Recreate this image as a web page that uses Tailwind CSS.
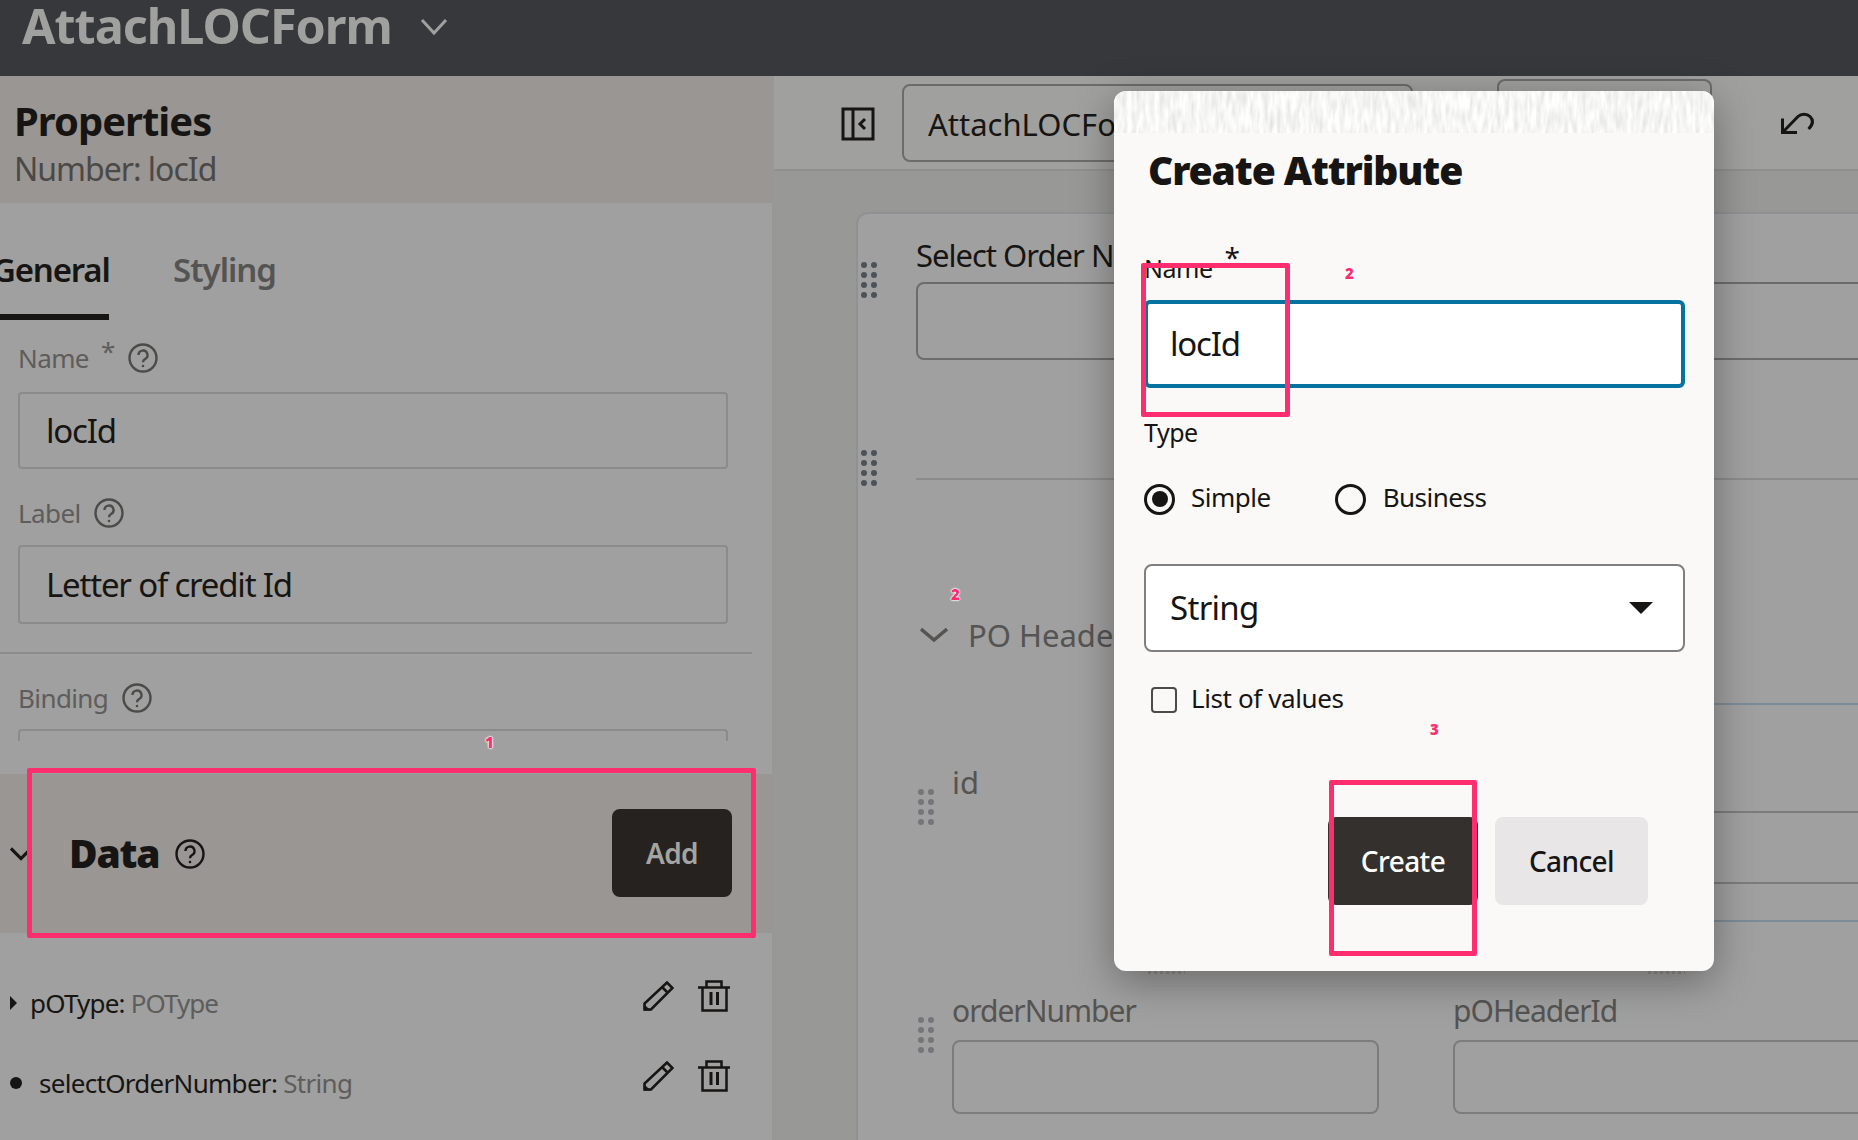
<!DOCTYPE html>
<html lang="en">
<head>
    <meta charset="UTF-8">
    <title>AttachLOCForm</title>
    <script src="https://cdn.jsdelivr.net/npm/@tailwindcss/browser@4"></script>
</head>
<body class="h-screen overflow-hidden relative bg-[#a0a0a0] text-[#161513] font-['Noto_Sans',sans-serif]">
    <!-- Top bar -->
    <header class="h-[76px] bg-[#37383c] flex items-start pl-[22px]">
        <h1 class="text-[48.500px] leading-[50px] font-bold text-[#a0a09e] tracking-[-1px]">AttachLOCForm</h1>
        <svg class="w-[28px] h-[18px] ml-[28px] mt-[18px]" viewBox="0 0 28 18" fill="none" stroke="#a0a09e" stroke-width="3"><path d="M2 2l12 13L26 2"/></svg>
    </header>

    <div class="flex h-[1064px]">
        <!-- Properties panel -->
        <aside class="w-[774px] shrink-0 border-r-2 border-[#979797] bg-[#a0a0a0] overflow-hidden">
            <div class="h-[127px] bg-[#9a9694] pl-[14px] pt-[22px]">
                <h2 class="text-[40px] leading-[46px] font-bold tracking-[-1px]">Properties</h2>
                <p class="mt-[3px] text-[32px] leading-[44px] text-[#4a4947] tracking-[-1px]">Number: locId</p>
            </div>
            <div class="flex h-[117px] pt-[45px] -ml-[8px]">
                <div class="w-[117px] h-[72px] border-b-[6px] border-[#161513] text-[33px] leading-[44px] font-semibold tracking-[-1.200px] whitespace-nowrap">General</div>
                <div class="ml-[64px] text-[33px] leading-[44px] font-semibold text-[#555452] tracking-[-1px]">Styling</div>
            </div>
            <div class="pl-[18px] pr-[44px]">
                <div class="flex items-center h-[36px] mt-[20px] text-[#5e5d5b] text-[26px] tracking-[-0.6px]">
                    <span>Name</span><span class="ml-[12px] -mt-[14px] text-[26px]">*</span>
                    <svg class="w-[30px] h-[30px] ml-[13px]" viewBox="0 0 30 30" fill="none" stroke="#4c4b49" stroke-width="2.4"><circle cx="15" cy="15" r="13.5"/><path d="M10.5 12a4.5 4.5 0 1 1 6.6 4c-1.500.9-2.100 1.800-2.100 3.200"/><circle cx="15" cy="23" r="1.300" fill="#4c4b49" stroke="none"/></svg>
                </div>
                <div class="h-[77px] mt-[16px] border-2 border-[#8b8b8b] rounded-[4px] pl-[26px] flex items-center text-[33px] tracking-[-1.2px]">locId</div>
                <div class="flex items-center h-[36px] mt-[26px] text-[#5e5d5b] text-[26px] tracking-[-0.6px]">
                    <span>Label</span>
                    <svg class="w-[30px] h-[30px] ml-[13px]" viewBox="0 0 30 30" fill="none" stroke="#4c4b49" stroke-width="2.4"><circle cx="15" cy="15" r="13.5"/><path d="M10.5 12a4.5 4.5 0 1 1 6.6 4c-1.500.9-2.100 1.800-2.100 3.200"/><circle cx="15" cy="23" r="1.300" fill="#4c4b49" stroke="none"/></svg>
                </div>
                <div class="h-[79px] mt-[14px] border-2 border-[#8b8b8b] rounded-[4px] pl-[26px] flex items-center text-[33px] tracking-[-1.2px]">Letter of credit Id</div>
            </div>
            <div class="h-[2px] w-[752px] bg-[#8b8b8b] mt-[28px]"></div>
            <div class="pl-[18px] pr-[44px] h-[120px] overflow-hidden">
                <div class="flex items-center h-[36px] mt-[26px] text-[#5e5d5b] text-[26px] tracking-[-0.6px]">
                    <span>Binding</span>
                    <svg class="w-[30px] h-[30px] ml-[14px]" viewBox="0 0 30 30" fill="none" stroke="#4c4b49" stroke-width="2.4"><circle cx="15" cy="15" r="13.5"/><path d="M10.5 12a4.5 4.5 0 1 1 6.6 4c-1.500.9-2.100 1.800-2.100 3.200"/><circle cx="15" cy="23" r="1.300" fill="#4c4b49" stroke="none"/></svg>
                </div>
                <div class="h-[12px] mt-[13px] border-2 border-b-0 border-[#8b8b8b] rounded-t-[4px]"></div>
            </div>
            <!-- Data section -->
            <div class="h-[159px] bg-[#9a9694] flex items-center pl-[10px] pr-[40px]">
                <svg class="w-[22px] h-[16px]" viewBox="0 0 24 16" fill="none" stroke="#161513" stroke-width="3.500"><path d="M1 2l11 11L23 2"/></svg>
                <span class="ml-[37px] text-[39px] font-black tracking-[-1.2px]">Data</span>
                <svg class="w-[30px] h-[30px] ml-[16px]" viewBox="0 0 30 30" fill="none" stroke="#161513" stroke-width="2.4"><circle cx="15" cy="15" r="13.5"/><path d="M10.5 12a4.500 4.500 0 1 1 6.600 4c-1.500.9-2.100 1.800-2.100 3.200"/><circle cx="15" cy="23" r="1.300" fill="#161513" stroke="none"/></svg>
                <button class="ml-auto w-[120px] h-[88px] -mt-[2px] rounded-[8px] bg-[#26221f] text-[#a4a4a2] text-[28px] font-semibold tracking-[-0.6px]">Add</button>
            </div>
            <div class="pl-[10px] pr-[42px]">
                <div class="flex items-center h-[80px] mt-[30px]">
                    <span class="w-0 h-0 border-y-[7px] border-y-transparent border-l-[7px] border-l-[#161513]"></span>
                    <span class="ml-[13px] text-[26px] tracking-[-0.8px]">pOType: <span class="text-[#5e5d5b] tracking-[-1px]">POType</span></span>
                    <div class="ml-auto flex gap-[24px] items-center -mt-[14px]">
                        <svg class="w-[31px] h-[30px]" viewBox="0 0 31 30" fill="none" stroke="#161513" stroke-width="2.600"><path d="M1.500 28.500v-6L24 1.500l5.500 5.500L8 28.500zM19 6l6 6"/><path d="M1 23v6.500h6.500z" fill="#161513" stroke="none"/></svg>
                        <svg class="w-[32px] h-[32px]" viewBox="0 0 32 32" fill="none" stroke="#161513" stroke-width="2.500"><path d="M0 7.500h32M8.500 7.500V1.500h15v6M4.500 7.500v23h24v-23"/><path d="M13 12v13M19.500 12v13" stroke-width="3"/></svg>
                    </div>
                </div>
                <div class="flex items-center h-[80px]">
                    <span class="w-[12px] h-[12px] rounded-full bg-[#161513]"></span>
                    <span class="ml-[17px] text-[26px] tracking-[-0.7px]">selectOrderNumber: <span class="text-[#5e5d5b]">String</span></span>
                    <div class="ml-auto flex gap-[24px] items-center -mt-[14px]">
                        <svg class="w-[31px] h-[30px]" viewBox="0 0 31 30" fill="none" stroke="#161513" stroke-width="2.600"><path d="M1.500 28.500v-6L24 1.500l5.500 5.500L8 28.500zM19 6l6 6"/><path d="M1 23v6.500h6.500z" fill="#161513" stroke="none"/></svg>
                        <svg class="w-[32px] h-[32px]" viewBox="0 0 32 32" fill="none" stroke="#161513" stroke-width="2.500"><path d="M0 7.500h32M8.500 7.500V1.500h15v6M4.500 7.500v23h24v-23"/><path d="M13 12v13M19.500 12v13" stroke-width="3"/></svg>
                    </div>
                </div>
            </div>
        </aside>

        <!-- Form canvas -->
        <main class="flex-1 min-w-0 bg-[#989896] overflow-hidden">
            <div class="h-[95px] bg-[#a0a09e] border-b-2 border-[#8f8f8f] flex items-start pl-[67px]">
                <svg class="w-[34px] h-[34px] mt-[31px] shrink-0" viewBox="0 0 34 34" fill="none" stroke="#161513" stroke-width="3"><path d="M2 2h30v30H2zM12 2v30M24 12l-5 5 5 5"/></svg>
                <div class="w-[511px] h-[78px] mt-[8px] ml-[27px] shrink-0 border-2 border-[#6c6c6c] rounded-[8px] pl-[24px] pt-[3px] flex items-center text-[31px] text-[#161513] overflow-hidden whitespace-nowrap">AttachLOCForm</div>
                <div class="w-[215px] h-[60px] mt-[3px] ml-[84px] shrink-0 border-2 border-b-0 border-[#6c6c6c] rounded-t-[8px]"></div>
                <svg class="w-[34px] h-[22px] mt-[36px] ml-[69px] shrink-0" viewBox="0 0 34 22" fill="none" stroke="#161513" stroke-width="3"><path d="M1.500 6.500v14h14.500M1.500 20.500L17 4.500c3-3 9-3 12 0 3.500 3.500 3 8-1.500 12.500"/></svg>
            </div>
            <div class="ml-[82px] mt-[41px] h-[950px] border-2 border-r-0 border-[#8f9193] rounded-l-[12px] bg-[#a0a0a0] pl-[58px] relative">
                <svg class="absolute left-[3px] top-[48px] w-[17px] h-[37px]" viewBox="0 0 17 37" fill="#4c5258"><circle cx="3" cy="3" r="3"/><circle cx="13" cy="3" r="3"/><circle cx="3" cy="13" r="3"/><circle cx="13" cy="13" r="3"/><circle cx="3" cy="23" r="3"/><circle cx="13" cy="23" r="3"/><circle cx="3" cy="33" r="3"/><circle cx="13" cy="33" r="3"/></svg>
                <svg class="absolute left-[3px] top-[236px] w-[17px] h-[37px]" viewBox="0 0 17 37" fill="#4c5258"><circle cx="3" cy="3" r="3"/><circle cx="13" cy="3" r="3"/><circle cx="3" cy="13" r="3"/><circle cx="13" cy="13" r="3"/><circle cx="3" cy="23" r="3"/><circle cx="13" cy="23" r="3"/><circle cx="3" cy="33" r="3"/><circle cx="13" cy="33" r="3"/></svg>
                <div class="pt-[20px] text-[31px] leading-[42px] tracking-[-1px] whitespace-nowrap">Select Order Number</div>
                <div class="h-[78px] mt-[6px] -mr-[20px] border-2 border-[#6c6c6c] rounded-[8px]"></div>
                <div class="h-[2px] mt-[118px] bg-[#8b8b8b]"></div>
                <div class="flex items-center mt-[134px]">
                    <svg class="w-[28px] h-[16px] ml-[4px]" viewBox="0 0 28 16" fill="none" stroke="#555452" stroke-width="3.500"><path d="M1 2l13 11L27 2"/></svg>
                    <span class="ml-[20px] text-[31px] text-[#555452] leading-[42px] whitespace-nowrap">PO Header</span>
                </div>
                <div class="h-[2px] mt-[47px] ml-[540px] bg-[#7c8b96]"></div>
                <div class="pl-[36px] mt-[56px] flex justify-between relative">
                    <svg class="absolute left-[2px] top-[28px] w-[17px] h-[37px]" viewBox="0 0 17 37" fill="#75757a"><circle cx="3" cy="3" r="3"/><circle cx="13" cy="3" r="3"/><circle cx="3" cy="13" r="3"/><circle cx="13" cy="13" r="3"/><circle cx="3" cy="23" r="3"/><circle cx="13" cy="23" r="3"/><circle cx="3" cy="33" r="3"/><circle cx="13" cy="33" r="3"/></svg>
                    <div class="text-[31px] leading-[42px] text-[#555452]">id</div>
                    <div class="w-[350px] h-[73px] mt-[50px] -mr-[20px] border-2 border-[#7c7c7c] rounded-[8px]"></div>
                </div>
                <div class="h-[2px] mt-[36px] ml-[540px] bg-[#7c8b96]"></div>
                <div class="pl-[36px] mt-[68px] flex gap-[74px] relative">
                    <svg class="absolute left-[2px] top-[27px] w-[17px] h-[37px]" viewBox="0 0 17 37" fill="#75757a"><circle cx="3" cy="3" r="3"/><circle cx="13" cy="3" r="3"/><circle cx="3" cy="13" r="3"/><circle cx="13" cy="13" r="3"/><circle cx="3" cy="23" r="3"/><circle cx="13" cy="23" r="3"/><circle cx="3" cy="33" r="3"/><circle cx="13" cy="33" r="3"/></svg>
                    <div class="w-[427px] shrink-0">
                        <div class="text-[30px] leading-[42px] text-[#555452] tracking-[-1px]">orderNumber</div>
                        <div class="h-[74px] mt-[8px] border-2 border-[#7c7c7c] rounded-[8px]"></div>
                    </div>
                    <div class="w-[427px] shrink-0">
                        <div class="text-[30px] leading-[42px] text-[#555452] tracking-[-1px]">pOHeaderId</div>
                        <div class="h-[74px] mt-[8px] border-2 border-[#7c7c7c] rounded-[8px]"></div>
                    </div>
                </div>
            </div>
        </main>
    </div>

    <!-- Create Attribute dialog -->
    <div class="absolute left-[1114px] top-[91px] w-[600px] h-[880px] rounded-[12px] overflow-hidden bg-[#faf9f8] shadow-[0_10px_40px_rgba(0,0,0,0.35)]">
        <svg class="block w-[600px] h-[42px]" viewBox="0 0 600 42">
            <filter id="fibres" x="0" y="0" width="100%" height="100%">
                <feTurbulence type="fractalNoise" baseFrequency="0.22 0.05" numOctaves="2" seed="4"/>
                <feColorMatrix values="0.4 0 0 0 0.72 0.4 0 0 0 0.72 0.4 0 0 0 0.71 0 0 0 0 1"/>
            </filter>
            <rect width="600" height="42" filter="url(#fibres)"/>
        </svg>
        <div class="pl-[30px] pr-[29px]">
            <h2 class="pl-[4px] pt-[12px] text-[39px] leading-[50px] font-black tracking-[-1.1px]">Create Attribute</h2>
            <div class="h-[36px] mt-[55px] flex text-[25px] tracking-[-0.5px]"><span>Name</span><span class="ml-[12px] -mt-[14px] text-[28px]">*</span></div>
            <div class="h-[88px] mt-[14px] border-[4px] border-[#0572a0] rounded-[6px] bg-white pl-[22px] flex items-center text-[33px] tracking-[-1.2px]">locId</div>
            <div class="mt-[27px] text-[25px] leading-[34px] tracking-[-0.5px]">Type</div>
            <div class="flex items-center mt-[34px] h-[32px] text-[26px] tracking-[-0.5px]">
                <span class="w-[31px] h-[31px] rounded-full border-[3px] border-[#161513] flex items-center justify-center"><span class="w-[16px] h-[16px] rounded-full bg-[#161513]"></span></span>
                <span class="ml-[16px] -mt-[4px]">Simple</span>
                <span class="ml-[64px] w-[31px] h-[31px] rounded-full border-[3px] border-[#161513]"></span>
                <span class="ml-[17px] -mt-[4px]">Business</span>
            </div>
            <div class="h-[88px] mt-[49px] border-2 border-[#7f7f7f] rounded-[8px] bg-white pl-[24px] pr-[30px] flex items-center justify-between text-[33px] tracking-[-0.7px]">
                String
                <span class="w-0 h-0 border-x-[12px] border-x-transparent border-t-[12px] border-t-[#161513]"></span>
            </div>
            <div class="flex items-center mt-[34px] pl-[7px] h-[28px] text-[26px] tracking-[-0.4px]">
                <span class="w-[26px] h-[26px] rounded-[4px] border-2 border-[#4c4b49]"></span>
                <span class="ml-[14px] -mt-[4px]">List of values</span>
            </div>
            <div class="flex mt-[103px] ml-[184px] gap-[17px]">
                <button class="w-[150px] h-[88px] rounded-[8px] bg-[#33302e] text-white text-[28px] font-medium tracking-[-0.6px]">Create</button>
                <button class="w-[153px] h-[88px] rounded-[8px] bg-[#e8e6e7] text-[#161513] text-[28px] font-medium tracking-[-0.6px]">Cancel</button>
            </div>
        </div>
    </div>
    <div class="absolute left-[1148px] top-[971px] w-[37px] h-[3px] bg-[repeating-linear-gradient(90deg,#6c6c6c_0px,#6c6c6c_3px,transparent_3px,transparent_6px)]"></div>
    <div class="absolute left-[1648px] top-[971px] w-[37px] h-[3px] bg-[repeating-linear-gradient(90deg,#6c6c6c_0px,#6c6c6c_3px,transparent_3px,transparent_6px)]"></div>

    <!-- Annotation overlays -->
    <div class="absolute left-[27px] top-[768px] w-[729px] h-[170px] border-[5px] border-[#fe2d6e] rounded-[2px]"></div>
    <div class="absolute left-[1141px] top-[263px] w-[149px] h-[154px] border-[5px] border-[#fe2d6e] rounded-[2px]"></div>
    <div class="absolute left-[1329px] top-[780px] w-[148px] h-[176px] border-[5px] border-[#fe2d6e] rounded-[2px]"></div>
    <span class="absolute left-[485px] top-[734px] text-[#fe2d6e] text-[15px] leading-[16px] font-black [text-shadow:0_0_1px_white,0_0_2px_white,0_0_2px_white,0_0_2px_white]">1</span>
    <span class="absolute left-[1345px] top-[265px] text-[#fe2d6e] text-[15px] leading-[16px] font-black [text-shadow:0_0_1px_white,0_0_2px_white,0_0_2px_white,0_0_2px_white]">2</span>
    <span class="absolute left-[951px] top-[586px] text-[#fe2d6e] text-[15px] leading-[16px] font-black [text-shadow:0_0_1px_white,0_0_2px_white,0_0_2px_white,0_0_2px_white]">2</span>
    <span class="absolute left-[1430px] top-[721px] text-[#fe2d6e] text-[15px] leading-[16px] font-black [text-shadow:0_0_1px_white,0_0_2px_white,0_0_2px_white,0_0_2px_white]">3</span>
</body>
</html>
